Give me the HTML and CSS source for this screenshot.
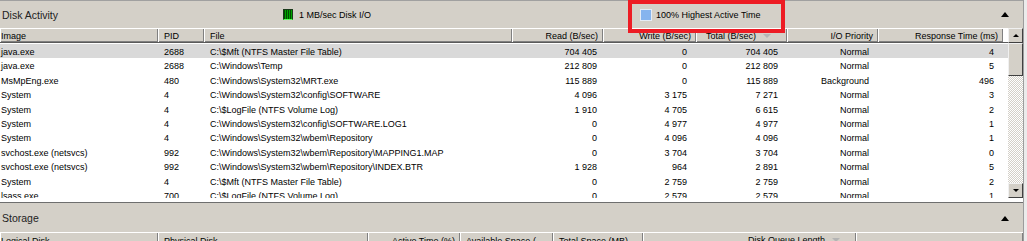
FILE: index.html
```html
<!DOCTYPE html>
<html lang="en">
<head>
    <meta charset="UTF-8">
    <title>Resource Monitor - Disk</title>
    <link rel="stylesheet" href="styles.css">
</head>
<body>
<div class="app">
    <div class="main">
        <!-- Disk Activity -->
        <section class="panel disk">
            <div class="panel-head">
                <span class="title">Disk Activity</span>
                <span class="legend legend-io"><i class="swatch green"></i>1 MB/sec Disk I/O</span>
                <span class="legend legend-active"><i class="swatch blue"></i>100% Highest Active Time</span>
                <span class="collapse"></span>
            </div>
            <div class="table-wrap">
                <div class="list">
                    <div class="cols disk-grid">
                        <div class="th">Image</div>
                        <div class="th">PID</div>
                        <div class="th">File</div>
                        <div class="th num">Read (B/sec)</div>
                        <div class="th num">Write (B/sec)</div>
                        <div class="th num sorted">Total (B/sec)<span class="sort"></span></div>
                        <div class="th num">I/O Priority</div>
                        <div class="th num">Response Time (ms)</div>
                    </div>
                    <div class="rows">
                        <div class="row disk-grid selected">
                            <div>java.exe</div><div>2688</div><div>C:\$Mft (NTFS Master File Table)</div>
                            <div class="num read">704 405</div><div class="num">0</div><div class="num">704 405</div><div class="num">Normal</div><div class="num">4</div>
                        </div>
                        <div class="row disk-grid">
                            <div>java.exe</div><div>2688</div><div>C:\Windows\Temp</div>
                            <div class="num read">212 809</div><div class="num">0</div><div class="num">212 809</div><div class="num">Normal</div><div class="num">5</div>
                        </div>
                        <div class="row disk-grid">
                            <div>MsMpEng.exe</div><div>480</div><div>C:\Windows\System32\MRT.exe</div>
                            <div class="num read">115 889</div><div class="num">0</div><div class="num">115 889</div><div class="num">Background</div><div class="num">496</div>
                        </div>
                        <div class="row disk-grid">
                            <div>System</div><div>4</div><div>C:\Windows\System32\config\SOFTWARE</div>
                            <div class="num read">4 096</div><div class="num">3 175</div><div class="num">7 271</div><div class="num">Normal</div><div class="num">3</div>
                        </div>
                        <div class="row disk-grid">
                            <div>System</div><div>4</div><div>C:\$LogFile (NTFS Volume Log)</div>
                            <div class="num read">1 910</div><div class="num">4 705</div><div class="num">6 615</div><div class="num">Normal</div><div class="num">2</div>
                        </div>
                        <div class="row disk-grid">
                            <div>System</div><div>4</div><div>C:\Windows\System32\config\SOFTWARE.LOG1</div>
                            <div class="num read">0</div><div class="num">4 977</div><div class="num">4 977</div><div class="num">Normal</div><div class="num">1</div>
                        </div>
                        <div class="row disk-grid">
                            <div>System</div><div>4</div><div>C:\Windows\System32\wbem\Repository</div>
                            <div class="num read">0</div><div class="num">4 096</div><div class="num">4 096</div><div class="num">Normal</div><div class="num">1</div>
                        </div>
                        <div class="row disk-grid">
                            <div>svchost.exe (netsvcs)</div><div>992</div><div>C:\Windows\System32\wbem\Repository\MAPPING1.MAP</div>
                            <div class="num read">0</div><div class="num">3 704</div><div class="num">3 704</div><div class="num">Normal</div><div class="num">0</div>
                        </div>
                        <div class="row disk-grid">
                            <div>svchost.exe (netsvcs)</div><div>992</div><div>C:\Windows\System32\wbem\Repository\INDEX.BTR</div>
                            <div class="num read">1 928</div><div class="num">964</div><div class="num">2 891</div><div class="num">Normal</div><div class="num">5</div>
                        </div>
                        <div class="row disk-grid">
                            <div>System</div><div>4</div><div>C:\$Mft (NTFS Master File Table)</div>
                            <div class="num read">0</div><div class="num">2 759</div><div class="num">2 759</div><div class="num">Normal</div><div class="num">2</div>
                        </div>
                        <div class="row disk-grid">
                            <div>lsass.exe</div><div>700</div><div>C:\$LogFile (NTFS Volume Log)</div>
                            <div class="num read">0</div><div class="num">2 579</div><div class="num">2 579</div><div class="num">Normal</div><div class="num">1</div>
                        </div>
                    </div>
                </div>
                <div class="vscroll">
                    <div class="sbtn up"><span class="arrow-up"></span></div>
                    <div class="track"><div class="thumb"></div></div>
                    <div class="sbtn down"><span class="arrow-down"></span></div>
                </div>
            </div>
        </section>

        <!-- Storage -->
        <section class="panel storage">
            <div class="panel-head">
                <span class="title">Storage</span>
                <span class="spacer"></span>
                <span class="collapse"></span>
            </div>
            <div class="cols storage-grid">
                <div class="th">Logical Disk</div>
                <div class="th">Physical Disk</div>
                <div class="th num">Active Time (%)</div>
                <div class="th">Available Space (...</div>
                <div class="th num wide">Total Space (MB)</div>
                <div class="th num sorted">Disk Queue Length<span class="sort"></span></div>
                <div class="th"></div>
            </div>
        </section>
    </div>
    <div class="edge"></div>

    <!-- annotation box -->
    <div class="mark"></div>
</div>
</body>
</html>
```

FILE: styles.css
```css
body {
    margin: 0;
    font-family: "Liberation Sans", Arial, sans-serif;
    font-size: 9px;
    color: #000;
}

.app {
    position: relative;
    width: 1027px;
    height: 241px;
    overflow: hidden;
    display: flex;
    background: #d4d0c8;
}

.main {
    width: 1023px;
    display: flex;
    flex-direction: column;
}

.edge {
    flex: 1;
    background: #ebebeb;
    border-left: 1px solid #9c9c9c;
}

.panel {
    border-top: 1px solid #a0a0a0;
}

.panel-head {
    height: 27px;
    display: flex;
    align-items: center;
    background: #d4d0c8;
}

.title {
    flex: 0 0 281px;
    padding-left: 2px;
    font-size: 10.5px;
    color: #222;
}

.legend {
    display: flex;
    align-items: center;
}

.legend-io {
    flex: 0 0 357px;
    gap: 6px;
}

.legend-active {
    flex: 1;
    gap: 4px;
}

.spacer {
    flex: 1;
}

.swatch {
    display: block;
    box-sizing: border-box;
}

.swatch.green {
    width: 10px;
    height: 11px;
    border: 1px solid #1a3a1a;
    border-bottom-color: #5cff5c;
    background: repeating-linear-gradient(to right, #004d00 0 1px, #00a300 1px 2px);
}

.swatch.blue {
    width: 12px;
    height: 12px;
    border: 1px solid #e4ecf6;
    background: #86b4ee;
}

.collapse {
    width: 0;
    height: 0;
    margin-right: 14px;
    border-left: 4px solid transparent;
    border-right: 4px solid transparent;
    border-bottom: 5px solid #000;
}

/* list */
.table-wrap {
    display: flex;
    height: 174px;
    background: #fff;
}

.list {
    width: 1008px;
    height: 170px;
    overflow: hidden;
}

.disk-grid {
    display: grid;
    grid-template-columns: 158px 46px 308px 91px 93px 91px 91px 125px;
}

.storage-grid {
    display: grid;
    grid-template-columns: 158px 210px 92px 93px 90px 213px 1fr;
}

.cols {
    height: 15px;
    box-sizing: border-box;
    border-bottom: 1px solid #5a5a5a;
}

.th {
    background: #d4d0c8;
    box-shadow: inset 1px 1px #fff, inset -1px -1px #808080;
    line-height: 14px;
    padding: 1px 5px 0 6px;
    white-space: nowrap;
    overflow: hidden;
}

.storage .th {
    padding-top: 2px;
}

.th:first-child {
    padding-left: 1px;
}

.th.num {
    text-align: right;
}

.th.wide {
    padding-right: 15px;
}

.th.sorted {
    display: flex;
    justify-content: flex-end;
    align-items: center;
    padding-right: 16px;
}

.sort {
    width: 0;
    height: 0;
    margin-left: 7px;
    border-left: 4px solid transparent;
    border-right: 4px solid transparent;
    border-top: 4px solid #b4b4b4;
}

.rows {
    display: grid;
    grid-auto-rows: 14.4px;
    padding-top: 1px;
}

.row > div {
    line-height: 14.4px;
    padding-top: 1px;
    white-space: nowrap;
    overflow: hidden;
    padding-left: 6px;
}

.row > div:first-child {
    padding-left: 1px;
}

.row > .num {
    text-align: right;
    padding-left: 0;
    padding-right: 9px;
}

.row > .num.read {
    padding-right: 6px;
}

.row.selected {
    background: #d9d9d9;
}

/* scrollbar */
.vscroll {
    width: 15px;
    display: flex;
    flex-direction: column;
    padding-bottom: 4px;
}

.sbtn {
    height: 15px;
    box-sizing: border-box;
    background: #d4d0c8;
    border: 1px solid;
    border-color: #f0f0f0 #404040 #404040 #f0f0f0;
    display: flex;
    align-items: center;
    justify-content: center;
}

.arrow-up,
.arrow-down {
    width: 0;
    height: 0;
    border-left: 3px solid transparent;
    border-right: 3px solid transparent;
}

.arrow-up {
    border-bottom: 3px solid #000;
}

.arrow-down {
    border-top: 3px solid #000;
}

.track {
    flex: 1;
    background: repeating-conic-gradient(#ffffff 0 25%, #d4d0c8 0 50%) 0 0 / 2px 2px;
}

.thumb {
    height: 33px;
    box-sizing: border-box;
    background: #d4d0c8;
    border: 1px solid;
    border-color: #f0f0f0 #404040 #404040 #f0f0f0;
}

.storage {
    border-top-color: #6e6e6e;
}

.storage .panel-head {
    height: 29px;
    padding-top: 1px;
    box-sizing: border-box;
}

/* red annotation frame */
.mark {
    position: absolute;
    left: 628px;
    top: 0;
    width: 157px;
    height: 33px;
    box-sizing: border-box;
    border: 4px solid #ed1c24;
}
```
